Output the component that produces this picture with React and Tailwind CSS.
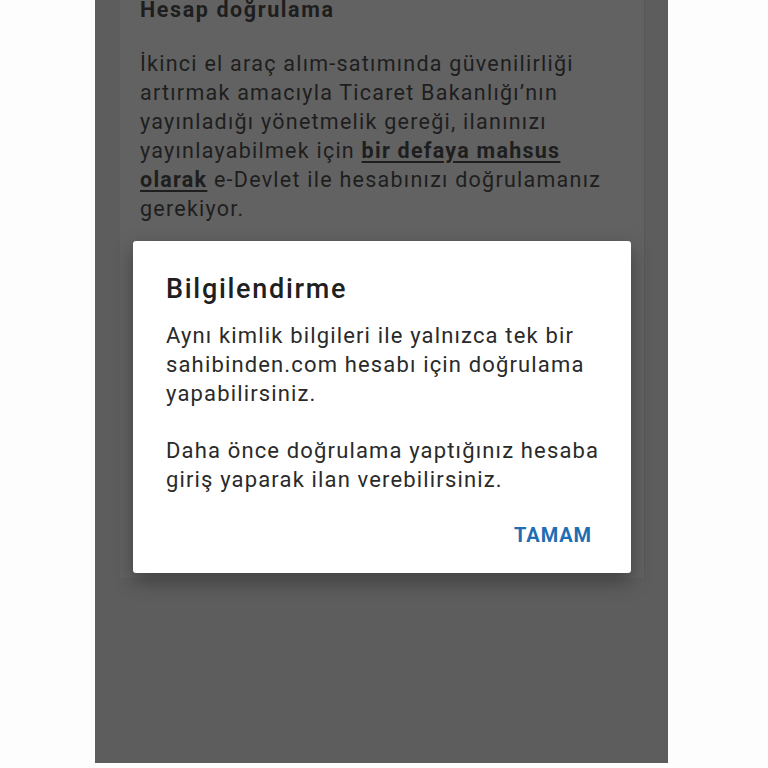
export default function App() {
  return (
    <div className="relative h-[768px] w-[768px] overflow-hidden bg-[#fdfdfd]" style={{ fontFamily: "Roboto, 'Noto Sans', sans-serif" }}>
      <div className="ml-[95px] h-full w-[573px] bg-[#5d5d5d] pl-[25px]">
        <div className="mt-[-5px] h-[583px] w-[525px] border-r border-[#585858] bg-[#626262] pl-[20px] pr-[10px] text-[21.5px] leading-[29px] tracking-[1.25px] text-[#1e1e1e]">
          <h2 className="font-bold tracking-[1.6px]">Hesap doğrulama</h2>
          <p className="mt-[25px]">
            İkinci el araç alım-satımında güvenilirliği artırmak amacıyla Ticaret Bakanlığı’nın yayınladığı yönetmelik gereği, ilanınızı yayınlayabilmek için{" "}
            <span className="font-bold underline underline-offset-[3px]">bir defaya mahsus olarak</span> e-Devlet ile hesabınızı doğrulamanız gerekiyor.
          </p>
        </div>
      </div>

      <div className="absolute left-[133px] top-[241px] flex h-[332px] w-[498px] flex-col rounded-[3px] bg-white pl-[33px] pr-[22px] pt-[31px] shadow-[0_8px_20px_rgba(0,0,0,0.35)]">
        <h1 className="text-[27px] font-medium leading-[34px] tracking-[1.7px] text-[#202020]">Bilgilendirme</h1>
        <div className="mt-[15px] text-[22px] leading-[29px] tracking-[1.15px] text-[#2a2a2a]">
          <p>Aynı kimlik bilgileri ile yalnızca tek bir sahibinden.com hesabı için doğrulama yapabilirsiniz.</p>
          <p className="mt-[28px]">Daha önce doğrulama yaptığınız hesaba giriş yaparak ilan verebilirsiniz.</p>
        </div>
        <div className="mt-[29px] flex justify-end pr-[17px]">
          <button className="text-[20px] font-bold leading-[24px] tracking-[0.9px] text-[#1f6db3]">TAMAM</button>
        </div>
      </div>
    </div>
  );
}
